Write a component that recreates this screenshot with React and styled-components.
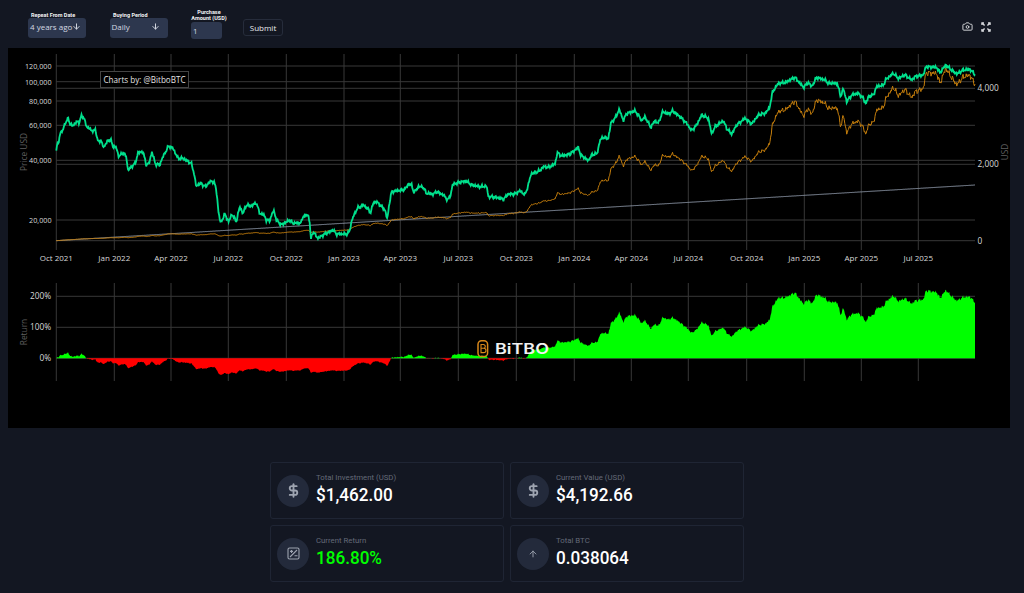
import styled, { createGlobalStyle } from "styled-components";
import { ArrowDown, ArrowUp, Camera, DollarSign } from "lucide-react";

const GlobalStyle = createGlobalStyle`
  html, body {
    margin: 0;
    height: 100%;
    overflow: hidden;
    background: #131722;
    font-family: 'Roboto', 'Liberation Sans', sans-serif;
  }
`

const Page = styled.div`
  width: 1024px;
  height: 593px;
  background: #131722;
  color: #fff;
  display: flex;
  flex-direction: column;
`

const Toolbar = styled.div`
  height: 48px;
  display: flex;
  align-items: flex-start;
  justify-content: space-between;
  padding-right: 33px;
`

const Controls = styled.div`
  display: flex;
  align-items: flex-start;
`

const Field = styled.div`
  width: ${(p) => p.$width}px;
  margin-left: ${(p) => p.$left}px;
  padding-top: ${(p) => p.$top}px;
  display: flex;
  flex-direction: column;
`

const FieldLabel = styled.label`
  font-size: 5.5px;
  font-weight: 700;
  line-height: 6px;
  padding-left: ${(p) => p.$indent || 0}px;
  text-align: ${(p) => (p.$center ? "center" : "left")};
  white-space: ${(p) => (p.$center ? "normal" : "nowrap")};
  color: #f2f3f5;
  margin-bottom: ${(p) => p.$gap || 0}px;
`

const SelectBox = styled.div`
  height: 17.5px;
  border-radius: 3px;
  background: #2d374e;
  color: #d5d9e2;
  font-family: 'Open Sans', sans-serif;
  font-size: 8px;
  display: flex;
  align-items: center;
  justify-content: space-between;
  padding: 0 ${(p) => p.$right}px 2px 2px;
  white-space: nowrap;

  & svg {
    flex-shrink: 0;
  }
`

const AmountInput = styled.div`
  width: 29px;
  height: 17px;
  border-radius: 3px;
  background: #2d374e;
  color: #d5d9e2;
  font-family: 'Open Sans', sans-serif;
  font-size: 8px;
  display: flex;
  align-items: center;
  padding-left: 2px;
`

const SubmitButton = styled.button`
  width: 40px;
  height: 17px;
  margin: 19px 0 0 16px;
  padding: 0;
  border: 1px solid #262c3b;
  border-radius: 3px;
  background: transparent;
  color: #e8eaee;
  font-family: 'Open Sans', sans-serif;
  font-size: 8px;
  font-weight: 500;
`

const ToolIcons = styled.div`
  display: flex;
  align-items: center;
  gap: 8px;
  padding-top: 21px;
  color: #d6d8dc;
`

const ChartPanel = styled.div`
  position: relative;
  width: 1002px;
  height: 380px;
  margin-left: 8px;
  background: #000;
  overflow: hidden;
`

const ChartSvg = styled.svg`
  display: block;
  font-family: 'Open Sans', sans-serif;
`

const Annotation = styled.div`
  position: absolute;
  left: 92px;
  top: 22.5px;
  width: 89px;
  height: 17.5px;
  box-sizing: border-box;
  border: 1px solid #444;
  background: #000;
  color: #e4e4e4;
  font-family: 'Open Sans', sans-serif;
  font-size: 8.1px;
  line-height: 15.5px;
  text-align: center;
  white-space: nowrap;
`

const StatsGrid = styled.div`
  width: 474px;
  margin: 34px 0 0 270px;
  display: grid;
  grid-template-columns: 234px 234px;
  gap: 6px;
`

const StatCard = styled.div`
  height: 57px;
  box-sizing: border-box;
  border: 1px solid #1f2534;
  border-radius: 3px;
  padding-left: 6px;
  display: flex;
  align-items: center;
  gap: 7px;
`

const StatIcon = styled.div`
  width: 32px;
  height: 32px;
  border-radius: 50%;
  background: #232a3b;
  color: #9ea4b0;
  display: flex;
  align-items: center;
  justify-content: center;
`

const StatText = styled.div`
  display: flex;
  flex-direction: column;
  margin-top: -3px;
`

const StatLabel = styled.span`
  font-size: 7.8px;
  line-height: 11px;
  color: #646a78;
`

// the original face is a narrow DIN, so Roboto gets squeezed to the same width
const StatValue = styled.span`
  display: inline-block;
  transform: scaleX(0.9);
  transform-origin: left center;
  font-size: 19px;
  font-weight: 500;
  line-height: 23px;
  white-space: nowrap;
  color: ${(p) => (p.$positive ? "#00ff00" : "#fff")};
`

// traced off the price line, in three runs: [zoom origin x, points...]
const TRACE = [
  [8, [141,325,147,285,152,280,156,250,165,240,172,218,181,205,186,222,195,228,205,215,213,218,220,197,230,208,237,235,245,232,250,245,262,238,268,270,280,275,288,292,300,270,310,272,315,290,325,292,332,320,345,308,355,320,360,362,370,350,382,340,390,308,405,305,415,345,423,340,432,305,442,342,455,345,465,320,482,288,495,295,510,325,525,325,550,340,558,370,565,410,575,400,595,410,603,395,618,395,625,420,632,490,638,520,650,492,662,515,672,492,685,515,695,470,705,490,715,465,730,468,745,458,755,490,768,495,775,510,785,512,797,480,805,510,820,525,845,510,855,520,880,518,885,498,900,495,906,520,908,570,915,545,930,565,945,555,975,540,985,552,1020,552]],
  [340, [12,560,28,545,36,510,42,495,52,475,70,465,85,478,92,488,100,458,110,455,125,470,135,480,142,508,148,460,155,425,175,422,195,418,205,402,215,405,222,428,235,410,248,410,260,430,280,432,290,425,310,435,323,450,332,435,338,403,355,398,378,393,395,405,420,410,440,408,445,440,470,442,490,448,505,432,525,432,540,422,555,435,565,405,573,372,600,362,610,350,625,352,645,342,652,308,665,318,690,312,715,292,722,315,745,332,755,315,772,310,780,270,790,262,805,265,813,218,825,205,838,178,850,212,860,190,885,183,895,195,905,212,915,200,932,232,945,212,955,220,968,185,985,192,998,183,1020,200]],
  [680, [20,220,35,242,50,225,65,195,85,205,95,252,105,230,130,212,140,235,155,252,170,225,195,205,215,222,235,195,255,190,268,175,278,125,295,100,315,98,345,82,370,112,385,98,395,110,410,82,435,90,445,100,472,100,482,140,490,115,500,155,515,135,535,130,550,145,558,162,565,140,580,135,590,110,610,105,618,88,640,70,655,85,675,75,695,90,705,80,730,75,738,50,770,52,780,68,797,45,815,60,830,72,850,60,870,58,885,73]],
];

const X0 = 56.3;
const X1 = 975;
const DAYS = 1462;

const tracePoints = TRACE.flatMap(([origin, pts]) => {
  const out = [];
  for (let i = 0; i < pts.length; i += 2) {
    out.push([origin + pts[i] / 3, 50 + pts[i + 1] / 3]);
  }
  return out;
});

// small repeatable wiggle so the line looks like daily data
const wiggle = (i) =>
  Math.sin(i * 2.3) * 0.8 + Math.sin(i * 5.1 + 1) * 0.7 + Math.sin(i * 0.83 + 2) * 0.5;

const buildSeries = () => {
  let k = 0;
  let btc = 0;
  const rows = [];
  for (let d = 0; d < DAYS; d++) {
    const x = X0 + ((X1 - X0) * d) / (DAYS - 1);
    while (k < tracePoints.length - 2 && tracePoints[k + 1][0] < x) k++;
    const [ax, ay] = tracePoints[k];
    const [bx, by] = tracePoints[k + 1];
    const t = bx === ax ? 0 : Math.min(1, Math.max(0, (x - ax) / (bx - ax)));
    const y = ay + (by - ay) * t + wiggle(d);
    const price = 20000 * Math.pow(2, (220 - y) / 59.7);
    btc += 1 / price;
    const cost = d + 1;
    const value = btc * price;
    rows.push({
      x,
      price: y,
      value: 240.7 - value * 0.0381,
      cost: 240.7 - cost * 0.0381,
      ret: 358.3 - (value / cost - 1) * 31,
    });
  }
  return rows;
};

const series = buildSeries();

const toLine = (key) =>
  series.map((r) => `${r.x.toFixed(1)},${r[key].toFixed(1)}`).join(" ");

const toArea = (keep) => {
  let d = "";
  let open = false;
  series.forEach((r) => {
    const on = keep(r.ret);
    if (on && !open) {
      d += `M${r.x.toFixed(1)} 358.3`;
      open = true;
    }
    if (on) d += `L${r.x.toFixed(1)} ${r.ret.toFixed(1)}`;
    if (!on && open) {
      d += `L${r.x.toFixed(1)} 358.3Z`;
      open = false;
    }
  });
  return open ? `${d}L${X1} 358.3Z` : d;
};

const DATE_TICKS = [
  [56.3, "Oct 2021"], [114.3, "Jan 2022"], [171, "Apr 2022"], [228.3, "Jul 2022"],
  [286.3, "Oct 2022"], [344, "Jan 2023"], [400.3, "Apr 2023"], [458.3, "Jul 2023"],
  [516.3, "Oct 2023"], [574.3, "Jan 2024"], [631.3, "Apr 2024"], [688.3, "Jul 2024"],
  [746.7, "Oct 2024"], [804.3, "Jan 2025"], [861.3, "Apr 2025"], [918.3, "Jul 2025"],
];

const PRICE_TICKS = [
  [66, "120,000"], [81.7, "100,000"], [101, "80,000"],
  [125.3, "60,000"], [160.3, "40,000"], [220, "20,000"],
];

const USD_TICKS = [[88.3, "4,000"], [164.3, "2,000"], [240.7, "0"]];

const RETURN_TICKS = [[296.3, "200%"], [327.3, "100%"], [358.3, "0%"]];

const GRID = "#383838";
const TICK = "#d8d8d8";
const AXIS_TITLE = "#5f5f5f";

function FullscreenIcon() {
  return (
    <svg width="10" height="10" viewBox="0 0 10 10" fill="none" stroke="currentColor" strokeWidth="1.4">
      <path d="M1 1l2.6 2.6M9 1L6.4 3.6M1 9l2.6-2.6M9 9L6.4 6.4" />
      <path d="M1 3V1h2M7 1h2v2M1 7v2h2M9 7v2H7" />
    </svg>
  );
}

function ReturnIcon() {
  return (
    <svg width="13" height="13" viewBox="0 0 13 13" fill="none" stroke="currentColor" strokeWidth="1.1">
      <rect x="1" y="1" width="11" height="11" rx="1.5" />
      <path d="M3 10L10 3M3 4.4h3M4.5 2.9v3M7.5 8.8h3" />
    </svg>
  );
}

function PriceChart() {
  return (
    <ChartSvg width="1002" height="380" viewBox="8 48 1002 380">
      {DATE_TICKS.map(([x, label]) => (
        <g key={label}>
          <line x1={x} x2={x} y1="54" y2="250" stroke={GRID} strokeWidth="1" />
          <line x1={x} x2={x} y1="283" y2="381" stroke={GRID} strokeWidth="1" />
          <text x={x} y="261" fontSize="8" fill={TICK} textAnchor="middle">{label}</text>
        </g>
      ))}
      {[...PRICE_TICKS, ...USD_TICKS].map(([y, label]) => (
        <line key={label} x1="56" x2="975" y1={y} y2={y} stroke={GRID} strokeWidth="1" />
      ))}
      {RETURN_TICKS.map(([y, label]) => (
        <g key={label}>
          <line x1="56" x2="975" y1={y} y2={y} stroke={GRID} strokeWidth="1" />
          <text x="51" y={y + 3} fontSize="8.3" fill={TICK} textAnchor="end">{label}</text>
        </g>
      ))}
      {PRICE_TICKS.map(([y, label]) => (
        <text key={label} x="51.5" y={y + 3} fontSize="7.2" fill={TICK} textAnchor="end">{label}</text>
      ))}
      {USD_TICKS.map(([y, label]) => (
        <text key={label} x="977.5" y={y + 3} fontSize="8.3" fill={TICK}>{label}</text>
      ))}
      <text transform="translate(27 152) rotate(-90)" fontSize="8.3" fill={AXIS_TITLE} textAnchor="middle">Price USD</text>
      <text transform="translate(27 332) rotate(-90)" fontSize="8.3" fill={AXIS_TITLE} textAnchor="middle">Return</text>
      <text transform="translate(1008 152) rotate(-90)" fontSize="8.3" fill={AXIS_TITLE} textAnchor="middle">USD</text>

      <polyline points={toLine("cost")} fill="none" stroke="#8b95a5" strokeWidth="1" />
      <polyline points={toLine("value")} fill="none" stroke="#c67f0c" strokeWidth="1" />
      <polyline points={toLine("price")} fill="none" stroke="#00e08c" strokeWidth="1.8" />

      <path d={toArea((y) => y <= 358.3)} fill="#00ff00" />
      <path d={toArea((y) => y > 358.3)} fill="#ff0000" />

      {/* bitbo logo */}
      <g fill="none" stroke="#d9881a" strokeWidth="1.5">
        <rect x="478" y="340.8" width="9.6" height="15.8" rx="3.6" />
        <path d="M481 344.5h2.4a1.7 1.7 0 0 1 0 3.8H481V344.5zM481 348.3h2.8a1.9 1.9 0 0 1 0 4.3H481V348.3z" strokeWidth="1.1" />
      </g>
      <text x="495" y="354" fontFamily="Inter, sans-serif" fontSize="14.6" fontWeight="600" fill="#f2f2f2" textLength="54" lengthAdjust="spacingAndGlyphs">BiTBO</text>
    </ChartSvg>
  );
}

function Stat({ icon, label, value, positive }) {
  return (
    <StatCard>
      <StatIcon>{icon}</StatIcon>
      <StatText>
        <StatLabel>{label}</StatLabel>
        <StatValue $positive={positive}>{value}</StatValue>
      </StatText>
    </StatCard>
  );
}

export default function App() {
  return (
    <Page>
      <GlobalStyle />
      <Toolbar>
        <Controls>
          <Field $width={58} $left={28} $top={12}>
            <FieldLabel $indent={3}>Repeat From Date</FieldLabel>
            <SelectBox $right={7}>
              4 years ago
              <ArrowDown size={9} strokeWidth={2.6} />
            </SelectBox>
          </Field>
          <Field $width={58.5} $left={23.5} $top={12}>
            <FieldLabel $indent={3.5}>Buying Period</FieldLabel>
            <SelectBox $right={8}>
              Daily
              <ArrowDown size={9} strokeWidth={2.6} />
            </SelectBox>
          </Field>
          <Field $width={36} $left={23} $top={9}>
            <FieldLabel $center $gap={1}>Purchase Amount (USD)</FieldLabel>
            <AmountInput>1</AmountInput>
          </Field>
          <SubmitButton>Submit</SubmitButton>
        </Controls>
        <ToolIcons>
          <Camera size={11} strokeWidth={2.1} />
          <FullscreenIcon />
        </ToolIcons>
      </Toolbar>

      <ChartPanel>
        <PriceChart />
        <Annotation>Charts by: @BitboBTC</Annotation>
      </ChartPanel>

      <StatsGrid>
        <Stat icon={<DollarSign size={15} strokeWidth={3} />} label="Total Investment (USD)" value="$1,462.00" />
        <Stat icon={<DollarSign size={15} strokeWidth={3} />} label="Current Value (USD)" value="$4,192.66" />
        <Stat icon={<ReturnIcon />} label="Current Return" value="186.80%" positive />
        <Stat icon={<ArrowUp size={10} strokeWidth={2.2} />} label="Total BTC" value="0.038064" />
      </StatsGrid>
    </Page>
  );
}
